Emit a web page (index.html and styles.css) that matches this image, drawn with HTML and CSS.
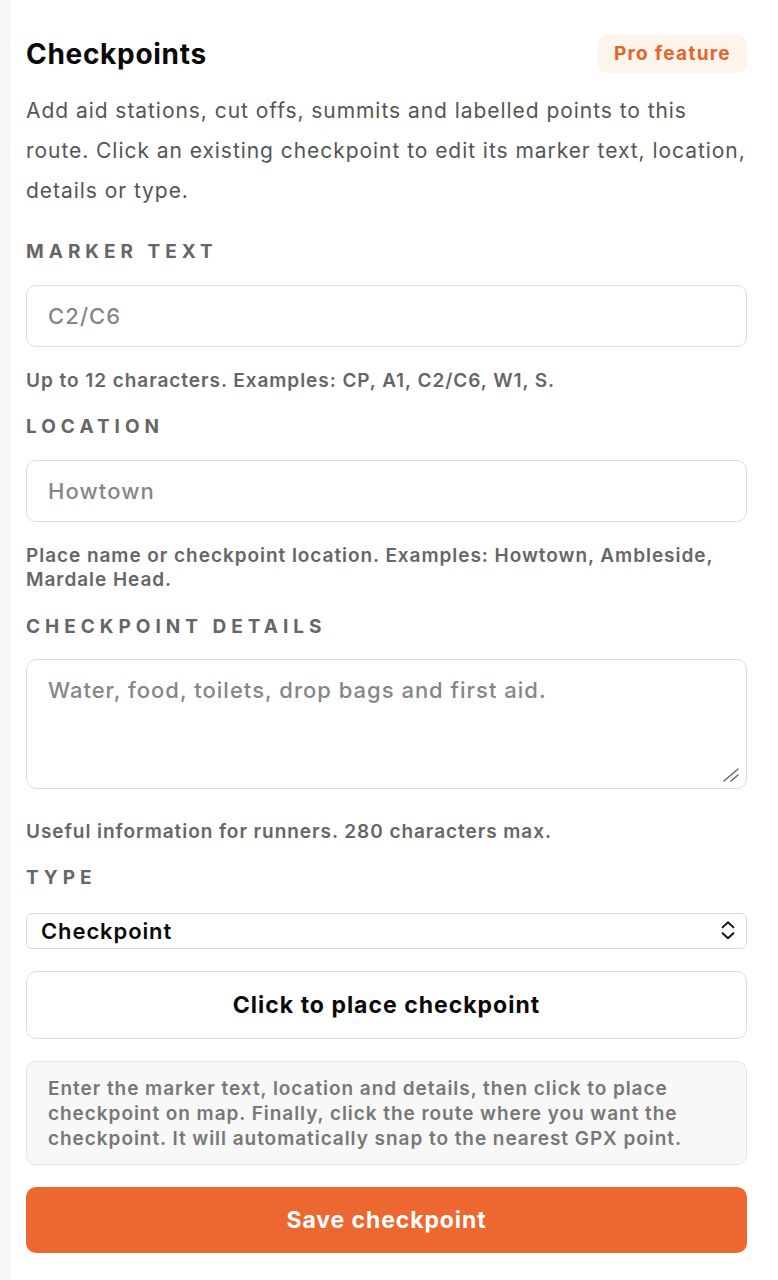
FILE: index.html
```html
<!DOCTYPE html>
<html lang="en">
<head>
<meta charset="utf-8">
<title>Checkpoints</title>
<link rel="stylesheet" href="styles.css">
</head>
<body>
<main class="panel">
  <header class="head">
    <h1 class="title">Checkpoints</h1>
    <span class="badge">Pro feature</span>
  </header>
  <p class="intro">Add aid stations, cut offs, summits and labelled points to this route. Click an existing checkpoint to edit its marker text, location, details or type.</p>

  <label class="label" for="marker">Marker text</label>
  <input class="field" id="marker" type="text" placeholder="C2/C6">
  <p class="hint">Up to 12 characters. Examples: CP, A1, C2/C6, W1, S.</p>

  <label class="label" for="loc">Location</label>
  <input class="field" id="loc" type="text" placeholder="Howtown">
  <p class="hint">Place name or checkpoint location. Examples: Howtown, Ambleside, Mardale Head.</p>

  <label class="label label-details" for="details">Checkpoint details</label>
  <div class="area-wrap">
    <textarea class="area" id="details" placeholder="Water, food, toilets, drop bags and first aid."></textarea>
    <svg class="grip" width="18" height="16" viewBox="0 0 18 16" aria-hidden="true"><path d="M2 14 L16 2 M9 14 L16 8" stroke="#6a6a6a" stroke-width="1.6" stroke-linecap="round"/></svg>
  </div>
  <p class="hint hint-gap">Useful information for runners. 280 characters max.</p>

  <label class="label" for="type">Type</label>
  <div class="select-wrap">
    <select class="select" id="type">
      <option>Checkpoint</option>
    </select>
    <svg class="chev" width="14" height="20" viewBox="0 0 14 20" aria-hidden="true"><path d="M1.6 7.4 L7 2.3 L12.4 7.4 M1.6 13.2 L7 18.3 L12.4 13.2" fill="none" stroke="#111" stroke-width="1.9" stroke-linecap="round" stroke-linejoin="round"/></svg>
  </div>

  <button class="btn-place" type="button">Click to place checkpoint</button>

  <div class="info">Enter the marker text, location and details, then click to place checkpoint on map. Finally, click the route where you want the checkpoint. It will automatically snap to the nearest GPX point.</div>

  <button class="btn-save" type="button">Save checkpoint</button>
</main>
</body>
</html>
```

FILE: styles.css
```css
* { box-sizing: border-box; }

html, body {
  margin: 0;
  padding: 0;
  background: #f6f6f6;
}

body {
  font-family: Inter, "Noto Sans", "Liberation Sans", sans-serif;
  color: #111;
}

.panel {
  margin-left: 10px;
  min-height: 1280px;
  background: #fff;
  padding: 35px 31px 30px 16px;
  display: flex;
  flex-direction: column;
}

.head {
  display: flex;
  align-items: center;
  justify-content: space-between;
  height: 38px;
}

.title {
  margin: 0;
  font-size: 28px;
  font-weight: 700;
  letter-spacing: 0.7px;
  color: #0a0a0a;
  line-height: 34px;
}

.badge {
  display: inline-block;
  height: 38px;
  line-height: 38px;
  padding: 0 16px;
  background: #fdf4ec;
  border-radius: 9px;
  color: #e0662c;
  font-size: 19px;
  font-weight: 700;
  letter-spacing: 1.3px;
}

.intro {
  margin: 18px 0 0;
  font-size: 21px;
  line-height: 40px;
  color: #555;
  letter-spacing: 0.95px;
}

.label {
  display: block;
  margin-top: 30px;
  font-size: 19px;
  line-height: 22px;
  font-weight: 700;
  text-transform: uppercase;
  letter-spacing: 5px;
  color: #666;
}

.hint + .label { margin-top: 23px; }
.hint + .label-details { margin-top: 24px; }

.field {
  display: block;
  width: 100%;
  height: 62px;
  margin-top: 22px;
  padding: 0 21px;
  border: 1px solid #dedede;
  border-radius: 10px;
  background: #fff;
  font-family: inherit;
  font-size: 22px;
  font-weight: 500;
  letter-spacing: 1.1px;
  color: #111;
  outline: none;
}

.field::placeholder,
.area::placeholder {
  color: #868686;
  opacity: 1;
}

.hint {
  margin: 22px 0 0;
  font-size: 19px;
  line-height: 24px;
  font-weight: 600;
  color: #666;
  letter-spacing: 0.95px;
}

.hint-gap { margin-top: 31px; }

.area-wrap {
  position: relative;
  margin-top: 21px;
}

.area {
  display: block;
  width: 100%;
  height: 130px;
  padding: 17px 21px;
  border: 1px solid #dedede;
  border-radius: 10px;
  background: #fff;
  font-family: inherit;
  font-size: 22px;
  line-height: 26px;
  font-weight: 500;
  letter-spacing: 1px;
  color: #111;
  resize: none;
  outline: none;
}

.grip {
  position: absolute;
  right: 7px;
  bottom: 6px;
}

.select-wrap {
  position: relative;
  margin-top: 24px;
}

.select {
  display: block;
  width: 100%;
  height: 36px;
  padding: 0 40px 0 14px;
  border: 1px solid #dcdcdc;
  border-radius: 6px;
  background: #fff;
  appearance: none;
  -webkit-appearance: none;
  font-family: inherit;
  font-size: 22px;
  font-weight: 600;
  letter-spacing: 0.9px;
  color: #0a0a0a;
  outline: none;
}

.chev {
  position: absolute;
  right: 12px;
  top: 7px;
  pointer-events: none;
}

.btn-place {
  display: block;
  width: 100%;
  height: 68px;
  margin-top: 22px;
  border: 1px solid #dedede;
  border-radius: 10px;
  background: #fff;
  font-family: inherit;
  font-size: 23px;
  font-weight: 700;
  color: #0a0a0a;
  letter-spacing: 1px;
}

.info {
  margin-top: 22px;
  padding: 14px 22px 13px 21px;
  border: 1px solid #e4e4e4;
  border-radius: 10px;
  background: #f8f8f8;
  font-size: 19px;
  line-height: 25px;
  font-weight: 600;
  color: #777;
  letter-spacing: 0.95px;
}

.btn-save {
  display: block;
  width: 100%;
  height: 66px;
  margin-top: 22px;
  border: none;
  border-radius: 10px;
  background: #ec6830;
  font-family: inherit;
  font-size: 23px;
  font-weight: 700;
  color: #fff;
  letter-spacing: 0.9px;
}
```
